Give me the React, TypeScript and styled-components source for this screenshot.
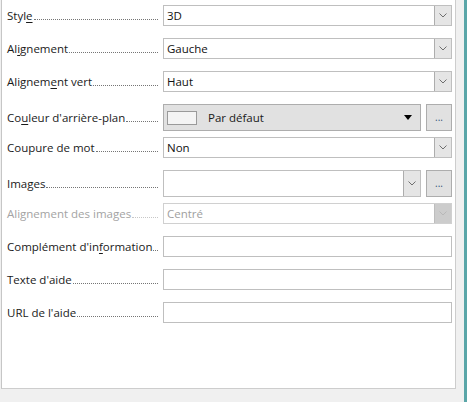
import styled, { createGlobalStyle } from 'styled-components'

const GlobalStyle = createGlobalStyle`
  html, body {
    margin: 0;
    padding: 0;
    background: #f0f0f0;
  }
  body {
    font-family: "Open Sans", "Noto Sans", sans-serif;
    font-size: 11.5px;
    color: #1a1a1a;
  }
`

const Page = styled.div`
  width: 467px;
  height: 402px;
  display: flex;
  background: #f0f0f0;
  overflow: hidden;
`

const Main = styled.div`
  width: 456px;
  padding-left: 1px;
  box-sizing: border-box;
  height: 389px;
  display: flex;
`

const Panel = styled.div`
  flex: 1;
  background: #fff;
  border-left: 1px solid #c6c6c6;
  border-right: 1px solid #cdcdcd;
  border-bottom: 1px solid #cdcdcd;
  padding: 5px 3px 0 5px;
  display: flex;
  flex-direction: column;
`

const Edge = styled.div`
  margin-left: 8px;
  width: 3px;
  height: 100%;
  background: #5aa6a8;
`

const Row = styled.div`
  height: 33px;
  display: grid;
  grid-template-columns: 156px 1fr;
  align-content: start;
  align-items: center;
`

const Label = styled.div<{ $disabled?: boolean }>`
  display: flex;
  align-items: baseline;
  padding-right: 5px;
  white-space: nowrap;
  color: ${({ $disabled }) => ($disabled ? '#a3a3a3' : '#1a1a1a')};
  line-height: 15px;
  u {
    text-underline-offset: 2px;
  }
`

const Leader = styled.span`
  flex: 1;
  min-width: 0;
  height: 0;
  margin-left: 1px;
  border-bottom: 1px dotted currentColor;
  opacity: 0.6;
`

const Field = styled.div`
  display: flex;
  gap: 5px;
  height: 100%;
`

const Box = styled.div<{ $disabled?: boolean; $tall?: boolean }>`
  flex: 1;
  height: ${({ $tall }) => ($tall ? 27 : 21)}px;
  box-sizing: border-box;
  display: flex;
  align-items: center;
  background: #fff;
  border: 1px solid ${({ $disabled }) => ($disabled ? '#d0d0d0' : '#bfbfbf')};
  color: ${({ $disabled }) => ($disabled ? '#a0a0a0' : '#111')};
`

const Value = styled.span`
  flex: 1;
  padding-left: 3px;
`

const Chevron = styled.div<{ $disabled?: boolean }>`
  width: 17px;
  height: 100%;
  box-sizing: border-box;
  display: flex;
  align-items: center;
  justify-content: center;
  background: ${({ $disabled }) => ($disabled ? '#cccccc' : '#e5e5e5')};
  border-left: 1px solid ${({ $disabled }) => ($disabled ? '#bdbdbd' : '#adadad')};
  color: ${({ $disabled }) => ($disabled ? '#b8b8b8' : '#6e6e6e')};
`

const ColorButton = styled.div`
  flex: 1;
  height: 27px;
  box-sizing: border-box;
  display: flex;
  align-items: center;
  background: #e1e1e1;
  border: 1px solid #adadad;
  padding: 0 8px 0 3px;
`

const Swatch = styled.span`
  width: 30px;
  height: 14px;
  box-sizing: border-box;
  background: #f4f4f4;
  border: 1px solid #9a9a9a;
  margin-right: 8px;
`

const Caret = styled.span`
  width: 0;
  height: 0;
  border-left: 4px solid transparent;
  border-right: 4px solid transparent;
  border-top: 5px solid #000;
`

const DotsButton = styled.div`
  width: 26px;
  height: 27px;
  box-sizing: border-box;
  display: flex;
  align-items: center;
  justify-content: center;
  background: #e1e1e1;
  border: 1px solid #adadad;
  color: #33557a;
  font-size: 10px;
  padding-bottom: 2px;
`

const Bottom = styled.div`
  flex: 1;
`

const ChevronIcon = () => (
  <svg width="8" height="5" viewBox="0 0 8 5">
    <path d="M0.5 0.5 L4 4 L7.5 0.5" fill="none" stroke="currentColor" strokeWidth="1" />
  </svg>
)

type Opt = { text: string; u?: number; disabled?: boolean }

const FieldLabel = ({ text, u, disabled }: Opt) => (
  <Label $disabled={disabled}>
    <span>
      {u === undefined ? (
        text
      ) : (
        <>
          {text.slice(0, u)}
          <u>{text[u]}</u>
          {text.slice(u + 1)}
        </>
      )}
    </span>
    <Leader />
  </Label>
)

const Select = ({ value, disabled }: { value: string; disabled?: boolean }) => (
  <Box $disabled={disabled}>
    <Value>{value}</Value>
    <Chevron $disabled={disabled}>
      <ChevronIcon />
    </Chevron>
  </Box>
)

export default function App() {
  return (
    <Page>
      <GlobalStyle />
      <Main>
        <Panel>
          <Row>
            <FieldLabel text="Style" u={4} />
            <Field>
              <Select value="3D" />
            </Field>
          </Row>
          <Row>
            <FieldLabel text="Alignement" u={2} />
            <Field>
              <Select value="Gauche" />
            </Field>
          </Row>
          <Row>
            <FieldLabel text="Alignement vert" u={7} />
            <Field>
              <Select value="Haut" />
            </Field>
          </Row>
          <Row>
            <FieldLabel text="Couleur d'arrière-plan" u={2} />
            <Field>
              <ColorButton>
                <Swatch />
                <Value>Par défaut</Value>
                <Caret />
              </ColorButton>
              <DotsButton>...</DotsButton>
            </Field>
          </Row>
          <Row>
            <FieldLabel text="Coupure de mot" />
            <Field>
              <Select value="Non" />
            </Field>
          </Row>
          <Row>
            <FieldLabel text="Images" />
            <Field>
              <Box $tall>
                <Value />
                <Chevron>
                  <ChevronIcon />
                </Chevron>
              </Box>
              <DotsButton>...</DotsButton>
            </Field>
          </Row>
          <Row>
            <FieldLabel text="Alignement des images" disabled />
            <Field>
              <Select value="Centré" disabled />
            </Field>
          </Row>
          <Row>
            <FieldLabel text="Complément d'information" u={15} />
            <Field>
              <Box />
            </Field>
          </Row>
          <Row>
            <FieldLabel text="Texte d'aide" />
            <Field>
              <Box />
            </Field>
          </Row>
          <Row>
            <FieldLabel text="URL de l'aide" />
            <Field>
              <Box />
            </Field>
          </Row>
          <Bottom />
        </Panel>
      </Main>
      <Edge />
    </Page>
  )
}
